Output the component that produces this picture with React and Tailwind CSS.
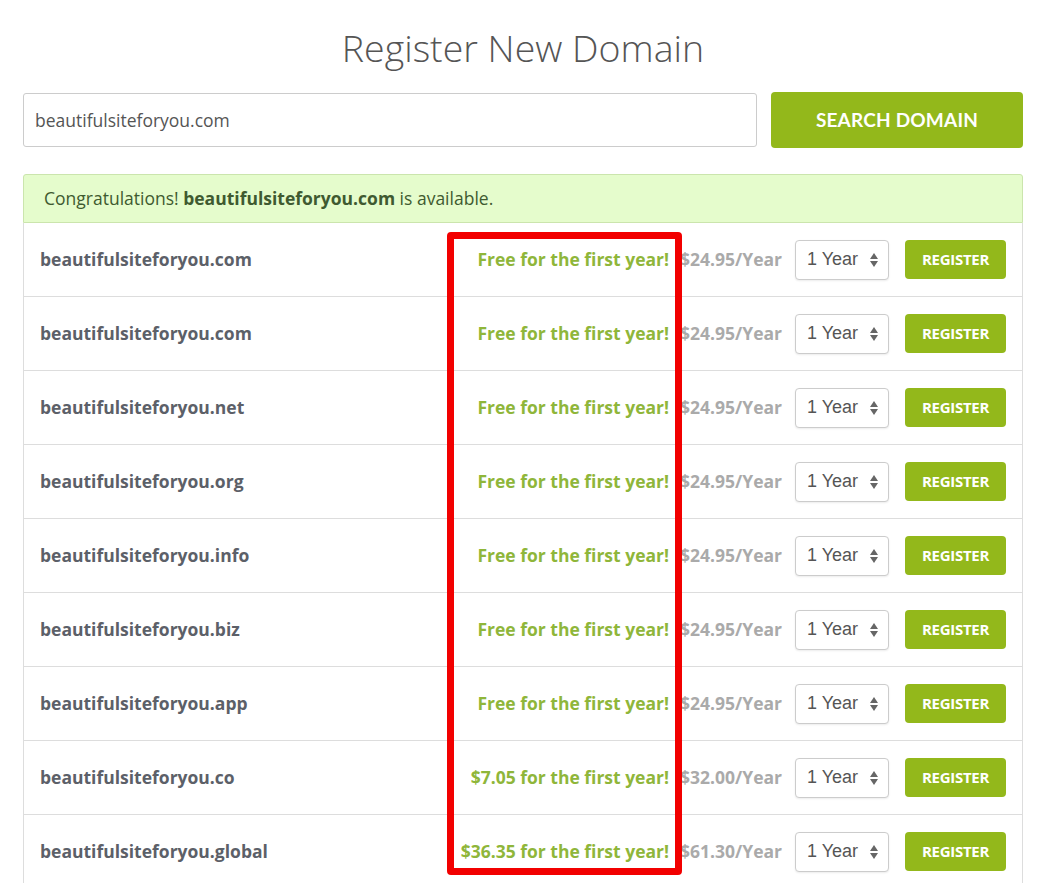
import React from "react";

const rows = [
  { name: "beautifulsiteforyou.com", promo: "Free for the first year!", price: "$24.95/Year" },
  { name: "beautifulsiteforyou.com", promo: "Free for the first year!", price: "$24.95/Year" },
  { name: "beautifulsiteforyou.net", promo: "Free for the first year!", price: "$24.95/Year" },
  { name: "beautifulsiteforyou.org", promo: "Free for the first year!", price: "$24.95/Year" },
  { name: "beautifulsiteforyou.info", promo: "Free for the first year!", price: "$24.95/Year" },
  { name: "beautifulsiteforyou.biz", promo: "Free for the first year!", price: "$24.95/Year" },
  { name: "beautifulsiteforyou.app", promo: "Free for the first year!", price: "$24.95/Year" },
  { name: "beautifulsiteforyou.co", promo: "$7.05 for the first year!", price: "$32.00/Year" },
  { name: "beautifulsiteforyou.global", promo: "$36.35 for the first year!", price: "$61.30/Year" },
];

function Select() {
  return (
    <div className="w-[94px] h-[40px] flex items-center justify-between pl-[11px] pr-[8px] border border-[#cccccc] rounded-[4px] bg-white shadow-[0_1px_2px_rgba(0,0,0,0.08)]">
      <span className="text-[18px] text-[#555555] font-['Liberation_Sans',Arial,sans-serif]">1 Year</span>
      <svg width="10" height="18" viewBox="0 0 10 18" className="mr-[1px]">
        <path d="M5 2 L9 8 L1 8 Z" fill="#666" />
        <path d="M5 16 L9 10 L1 10 Z" fill="#666" />
      </svg>
    </div>
  );
}

export default function App() {
  return (
    <div className="w-[1042px] min-h-[883px] bg-white font-['Open_Sans',sans-serif] overflow-hidden">
      <div className="pl-[23px] pr-[19px]">
        <h1 className="text-center text-[37.5px] font-light text-[#555555] pt-[20px] leading-[56px] h-[73px]">
          Register New Domain
        </h1>
        <div className="flex items-center gap-[14px] mt-[19px]">
          <div className="flex-1 h-[54px] border border-[#cccccc] rounded-[3px] flex items-center px-[11px] text-[17.5px] text-[#555555]">
            beautifulsiteforyou.com
          </div>
          <button className="w-[252px] h-[56px] bg-[#93b81b] rounded-[4px] text-white text-[19px] font-bold font-['Lato',sans-serif] tracking-[0.2px]">
            SEARCH DOMAIN
          </button>
        </div>
        <div className="mt-[26px] h-[49px] bg-[#e5fccc] border border-[#cbe5ad] rounded-t-[3px] flex items-center px-[20px] text-[17.5px] text-[#3f5a30]">
          <span>
            Congratulations! <b className="font-bold">beautifulsiteforyou.com</b> is available.
          </span>
        </div>
        <div className="relative border-x border-[#dddddd]">
          {rows.map((r, i) => (
            <div key={i} className="h-[74px] flex items-center border-b border-[#dddddd]">
              <div className="flex-1 pl-[16px] text-[17.5px] font-bold text-[#5c6068]">{r.name}</div>
              <div className="w-[240px] text-right text-[17.5px] font-bold text-[#8fb63a] whitespace-nowrap">{r.promo}</div>
              <div className="w-[126px] pl-[11px] text-[17.5px] font-bold text-[#aaaaaa] whitespace-nowrap">{r.price}</div>
              <Select />
              <button className="ml-[16px] mr-[16px] w-[101px] h-[39px] bg-[#93b81b] rounded-[4px] text-white text-[15px] font-bold tracking-[-0.3px]">
                REGISTER
              </button>
            </div>
          ))}
          <div className="absolute left-[423px] top-[9px] w-[235px] h-[643px] border-[7px] border-[#f20000] rounded-[4px] pointer-events-none" />
        </div>
      </div>
    </div>
  );
}
